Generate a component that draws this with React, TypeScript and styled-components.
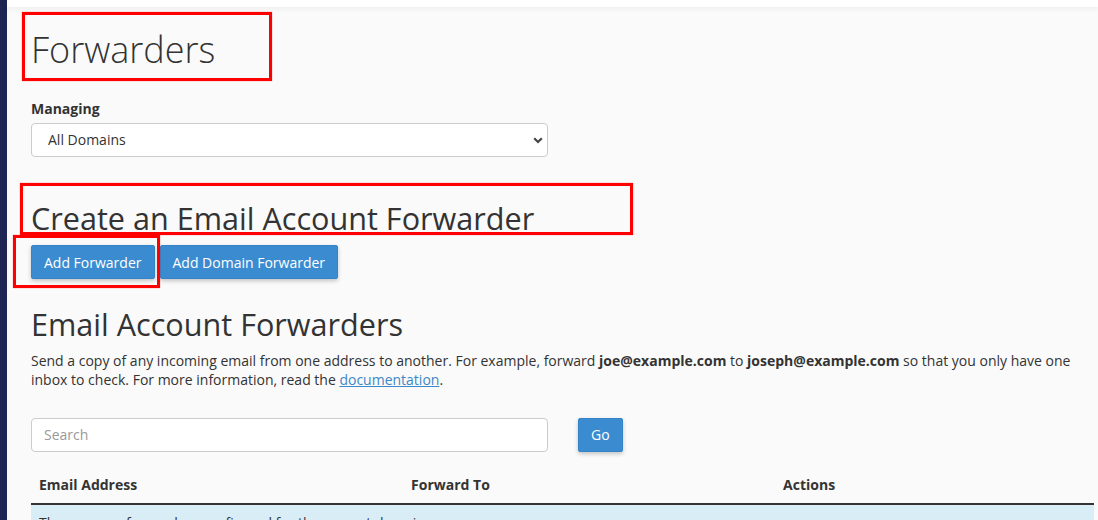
import * as React from 'react';
import styled, { createGlobalStyle } from 'styled-components';

const GlobalStyle = createGlobalStyle`
body {
  margin: 0;
  background: #fafafa;
  font-family: "Open Sans", "Liberation Sans", sans-serif;
  color: #333;
}
`

const Shell = styled.div`
position: relative;
display: flex;
min-height: 520px;
overflow: hidden;
`

const SideStrip = styled.div`
width: 7px;
flex-shrink: 0;
background: #1e2552;
`

const Main = styled.div`
flex: 1;
display: flex;
flex-direction: column;
min-width: 0;
`

const TopBar = styled.div`
height: 7px;
background: #fff;
box-shadow: 0 1px 6px rgba(0, 0, 0, 0.07);
`

const Content = styled.div`
padding: 0 4px 0 24px;
`

const Title = styled.h1`
margin: 23px 0 0;
font-size: 36px;
font-weight: 300;
line-height: 1.1;
color: #333;
`

const Label = styled.label`
display: block;
margin-top: 29px;
font-size: 14px;
font-weight: 700;
line-height: 20px;
`

const SelectWrap = styled.div`
position: relative;
width: 517px;
margin-top: 4px;
`

const Select = styled.select`
appearance: none;
width: 100%;
height: 34px;
padding: 0 30px 0 16px;
border: 1px solid #ccc;
border-radius: 4px;
background: #fff;
font-family: inherit;
font-size: 14px;
color: #333;
`

const Chevron = styled.svg`
position: absolute;
right: 5px;
top: 14px;
pointer-events: none;
`

const SectionTitle = styled.h2<{ $mt: number }>`
margin: ${p => p.$mt}px 0 0;
font-size: 30.6px;
font-weight: 400;
line-height: 1.1;
color: #333;
`

const ButtonRow = styled.div`
display: flex;
gap: 5px;
margin-top: 10px;
`

const Button = styled.button`
height: 34px;
padding: 0 12px;
border: 1px solid #3584c8;
border-radius: 2px;
background: #3b8bd0;
color: #fff;
font-family: inherit;
font-size: 14px;
box-shadow: 0 2px 4px rgba(0, 0, 0, 0.22);
cursor: pointer;
`

const Description = styled.p`
margin: 9px 0 0;
font-size: 14px;
line-height: 19.4px;
`

const DocLink = styled.a`
color: #3e87c8;
text-decoration: underline;
`

const SearchRow = styled.div`
display: flex;
gap: 30px;
margin-top: 28px;
`

const SearchInput = styled.input`
width: 517px;
height: 34px;
box-sizing: border-box;
padding: 0 12px;
border: 1px solid #ccc;
border-radius: 4px;
background: #fff;
font-family: inherit;
font-size: 14px;
&::placeholder {
  color: #999;
}
`

const Table = styled.div`
margin-top: 15px;
`

const HeaderRow = styled.div`
display: grid;
grid-template-columns: 35% 35% 30%;
border-bottom: 2px solid #333;
`

const HeadCell = styled.div`
padding: 8px;
font-size: 14px;
font-weight: 700;
line-height: 20px;
`

const EmptyRow = styled.div`
padding: 8px;
background: #d9edf7;
font-size: 14px;
line-height: 20px;
`

const Annotation = styled.div<{ $x: number, $y: number, $w: number, $h: number }>`
position: absolute;
left: ${p => p.$x}px;
top: ${p => p.$y}px;
width: ${p => p.$w}px;
height: ${p => p.$h}px;
box-sizing: border-box;
border: 3px solid #ff0000;
box-shadow: 0 0 1px rgba(255, 0, 0, 0.6);
pointer-events: none;
`

const App: React.FC = () => {
    return (
        <Shell>
            <GlobalStyle />
            <SideStrip />

            <Main>
                <TopBar />
                <Content>
                    <Title>Forwarders</Title>

                    <Label htmlFor="managing">Managing</Label>
                    <SelectWrap>
                        <Select id="managing" defaultValue="all">
                            <option value="all">All Domains</option>
                        </Select>
                        <Chevron width="10" height="7" viewBox="0 0 10 7">
                            <path d="M1.2 1.2 L5 5 L8.8 1.2" fill="none" stroke="#444" strokeWidth="2.2" />
                        </Chevron>
                    </SelectWrap>

                    <SectionTitle $mt={45}>Create an Email Account Forwarder</SectionTitle>
                    <ButtonRow>
                        <Button>Add Forwarder</Button>
                        <Button>Add Domain Forwarder</Button>
                    </ButtonRow>

                    <SectionTitle $mt={29}>Email Account Forwarders</SectionTitle>
                    <Description>
                        Send a copy of any incoming email from one address to another. For example, forward <b>joe@example.com</b> to <b>joseph@example.com</b> so that you only have one inbox to check. For more information, read the <DocLink href="#">documentation</DocLink>.
                    </Description>

                    <SearchRow>
                        <SearchInput placeholder="Search" />
                        <Button>Go</Button>
                    </SearchRow>

                    <Table>
                        <HeaderRow>
                            <HeadCell>Email Address</HeadCell>
                            <HeadCell>Forward To</HeadCell>
                            <HeadCell>Actions</HeadCell>
                        </HeaderRow>
                        <EmptyRow>There are no forwarders configured for the current domain.</EmptyRow>
                    </Table>
                </Content>
            </Main>

            <Annotation $x={22} $y={12} $w={250} $h={69} />
            <Annotation $x={20} $y={183} $w={613} $h={52} />
            <Annotation $x={13} $y={235} $w={147} $h={53} />
        </Shell>
    );
}

export default App;
